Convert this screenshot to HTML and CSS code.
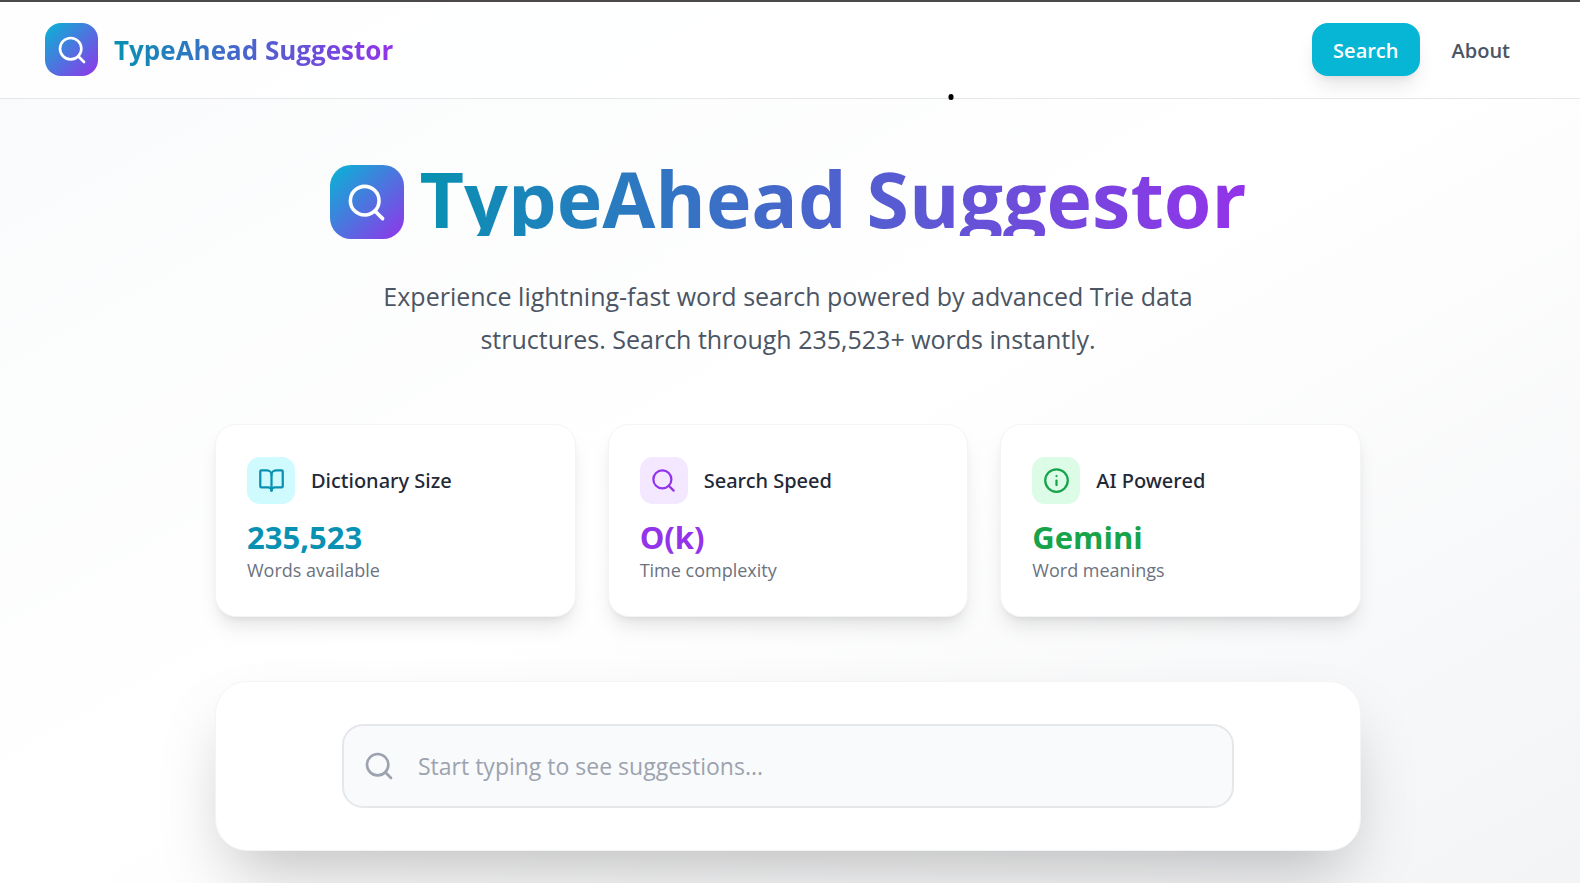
FILE: index.html
```html
<!DOCTYPE html>
<html lang="en">
<head>
<meta charset="utf-8">
<meta name="viewport" content="width=device-width, initial-scale=1">
<title>TypeAhead Suggestor</title>
<link rel="stylesheet" href="styles.css">
</head>
<body>
<header class="topbar">
  <div class="brand">
    <span class="brand-mark">
      <svg class="icon icon-lg" viewBox="0 0 24 24" aria-hidden="true"><circle cx="11" cy="11" r="8"/><path d="m21 21-4.3-4.3"/></svg>
    </span>
    <span class="brand-name gradient-text">TypeAhead Suggestor</span>
  </div>
  <nav class="nav">
    <button type="button" class="nav-button nav-button-active">Search</button>
    <button type="button" class="nav-button">About</button>
  </nav>
</header>

<main class="page">
  <section class="hero">
    <div class="hero-heading">
      <span class="hero-mark">
        <svg class="icon icon-xl" viewBox="0 0 24 24" aria-hidden="true"><circle cx="11" cy="11" r="8"/><path d="m21 21-4.3-4.3"/></svg>
      </span>
      <h1 class="hero-title gradient-text">TypeAhead Suggestor</h1>
    </div>
    <p class="hero-text">Experience lightning-fast word search powered by advanced Trie data structures. Search through 235,523+ words instantly.</p>
  </section>

  <section class="stats">
    <article class="card cyan">
      <div class="card-head">
        <span class="card-mark">
          <svg class="icon icon-md" viewBox="0 0 24 24" aria-hidden="true"><path d="M12 7v14"/><path d="M3 18a1 1 0 0 1-1-1V4a1 1 0 0 1 1-1h5a4 4 0 0 1 4 4 4 4 0 0 1 4-4h5a1 1 0 0 1 1 1v13a1 1 0 0 1-1 1h-6a3 3 0 0 0-3 3 3 3 0 0 0-3-3z"/></svg>
        </span>
        <h2 class="card-title">Dictionary Size</h2>
      </div>
      <p class="card-value">235,523</p>
      <p class="card-note">Words available</p>
    </article>
    <article class="card purple">
      <div class="card-head">
        <span class="card-mark">
          <svg class="icon icon-md" viewBox="0 0 24 24" aria-hidden="true"><circle cx="11" cy="11" r="8"/><path d="m21 21-4.3-4.3"/></svg>
        </span>
        <h2 class="card-title">Search Speed</h2>
      </div>
      <p class="card-value">O(k)</p>
      <p class="card-note">Time complexity</p>
    </article>
    <article class="card green">
      <div class="card-head">
        <span class="card-mark">
          <svg class="icon icon-md" viewBox="0 0 24 24" aria-hidden="true"><circle cx="12" cy="12" r="10"/><path d="M12 16v-4"/><path d="M12 8h.01"/></svg>
        </span>
        <h2 class="card-title">AI Powered</h2>
      </div>
      <p class="card-value">Gemini</p>
      <p class="card-note">Word meanings</p>
    </article>
  </section>

  <section class="search-panel">
    <label class="search-box">
      <svg class="icon icon-lg" viewBox="0 0 24 24" aria-hidden="true"><circle cx="11" cy="11" r="8"/><path d="m21 21-4.3-4.3"/></svg>
      <input class="search-input" type="text" aria-label="Search words" placeholder="Start typing to see suggestions...">
    </label>
  </section>
</main>
</body>
</html>
```
FILE: styles.css
```css
* {
  box-sizing: border-box;
}

body {
  margin: 0;
  min-height: 100vh;
  font-family: "Open Sans", "Noto Sans", sans-serif;
  color: #1f2937;
  background: linear-gradient(to bottom right, #f9fafb, #ffffff 50%, #f3f4f6);
}

h1, h2, p {
  margin: 0;
}

.icon {
  display: block;
  flex: none;
  fill: none;
  stroke: currentColor;
  stroke-width: 2;
  stroke-linecap: round;
  stroke-linejoin: round;
}

.icon-md { width: 27px; height: 27px; }
.icon-lg { width: 32px; height: 32px; }
.icon-xl { width: 43px; height: 43px; }

.gradient-text {
  color: transparent;
  background: linear-gradient(to right, #0891b2, #9333ea);
  background-clip: text;
  -webkit-background-clip: text;
}

.topbar {
  position: relative;
  display: flex;
  align-items: center;
  justify-content: space-between;
  padding: 21px 49px 22px 45px;
  border-top: 2px solid #4b494a;
  border-bottom: 1px solid #e5e7eb;
  background: rgba(255, 255, 255, 0.8);
}

.topbar::after {
  content: "";
  position: absolute;
  bottom: -2px;
  left: 60.2%;
  width: 5px;
  height: 6px;
  border-radius: 3px;
  background: #000;
  transform: translateX(-50%);
}

.brand {
  display: flex;
  align-items: center;
  gap: 16px;
}

.brand-mark,
.hero-mark {
  display: grid;
  place-items: center;
  flex: none;
  color: #fff;
  background: linear-gradient(to bottom right, #06b6d4, #9333ea);
}

.brand-mark {
  width: 53px;
  height: 53px;
  border-radius: 16px;
}

.brand-name {
  font-size: 26px;
  font-weight: 700;
  line-height: 36px;
}

.nav {
  display: flex;
  gap: 11px;
}

.nav-button {
  height: 53px;
  padding: 2px 21px 0;
  border: 0;
  border-radius: 16px;
  font: 600 20px/32px "Open Sans", "Noto Sans", sans-serif;
  color: #4b5563;
  background: transparent;
}

.nav-button-active {
  color: #fff;
  background: #06b6d4;
  box-shadow: 0 13px 20px -4px rgba(0, 0, 0, 0.1), 0 5px 8px -5px rgba(0, 0, 0, 0.1);
}

.page {
  max-width: 1150px;
  margin: 0 auto;
  padding: 66px 4px 32px 0;
}

.hero {
  display: flex;
  flex-direction: column;
  align-items: center;
  gap: 36px;
  text-align: center;
}

.hero-heading {
  display: flex;
  align-items: flex-end;
  gap: 16px;
}

.hero-mark {
  width: 74px;
  height: 74px;
  border-radius: 21px;
}

/* The tight line box trims the descenders of the gradient fill. */
.hero-title {
  margin: -4px 0 3px;
  font-size: 77px;
  font-weight: 700;
  line-height: 75px;
}

.hero-text {
  max-width: 860px;
  font-size: 25px;
  line-height: 43px;
  color: #4b5563;
}

.stats {
  display: grid;
  grid-template-columns: repeat(3, 1fr);
  gap: 32px;
  margin-top: 63px;
}

.card {
  padding: 32px 31px;
  border: 1px solid #f3f4f6;
  border-radius: 21px;
  background: #fff;
  box-shadow: 0 13px 20px -4px rgba(0, 0, 0, 0.1), 0 5px 8px -5px rgba(0, 0, 0, 0.1);
}

.card-head {
  display: flex;
  align-items: center;
  gap: 16px;
  margin-bottom: 13px;
}

.card-mark {
  display: grid;
  place-items: center;
  width: 48px;
  height: 47px;
  border-radius: 13px;
}

.card-title {
  font-family: "Noto Sans", "Open Sans", sans-serif;
  font-size: 20px;
  font-weight: 500;
  line-height: 32px;
}

.card-value {
  font-size: 31px;
  font-weight: 700;
  line-height: 40px;
}

.card-note {
  font-size: 18px;
  line-height: 27px;
  color: #6b7280;
}

.cyan .card-mark { color: #0891b2; background: #cffafe; }
.cyan .card-value { color: #0891b2; }
.purple .card-mark { color: #9333ea; background: #f3e8ff; }
.purple .card-value { color: #9333ea; }
.green .card-mark { color: #16a34a; background: #dcfce7; }
.green .card-value { color: #16a34a; }

.search-panel {
  margin-top: 64px;
  padding: 42px;
  border: 1px solid #f3f4f6;
  border-radius: 32px;
  background: #fff;
  box-shadow: 0 33px 67px -16px rgba(0, 0, 0, 0.25);
}

.search-box {
  display: flex;
  align-items: center;
  gap: 23px;
  max-width: 892px;
  height: 84px;
  margin: 0 auto;
  padding: 0 19px;
  border: 2px solid #e5e7eb;
  border-radius: 21px;
  color: #9ca3af;
  background: #f9fafb;
}

.search-input {
  flex: 1;
  min-width: 0;
  padding: 0;
  border: 0;
  outline: 0;
  font: 400 23px/36px "Open Sans", "Noto Sans", sans-serif;
  color: #1f2937;
  background: transparent;
}

.search-input::placeholder {
  color: #9ca3af;
  opacity: 1;
}
```
